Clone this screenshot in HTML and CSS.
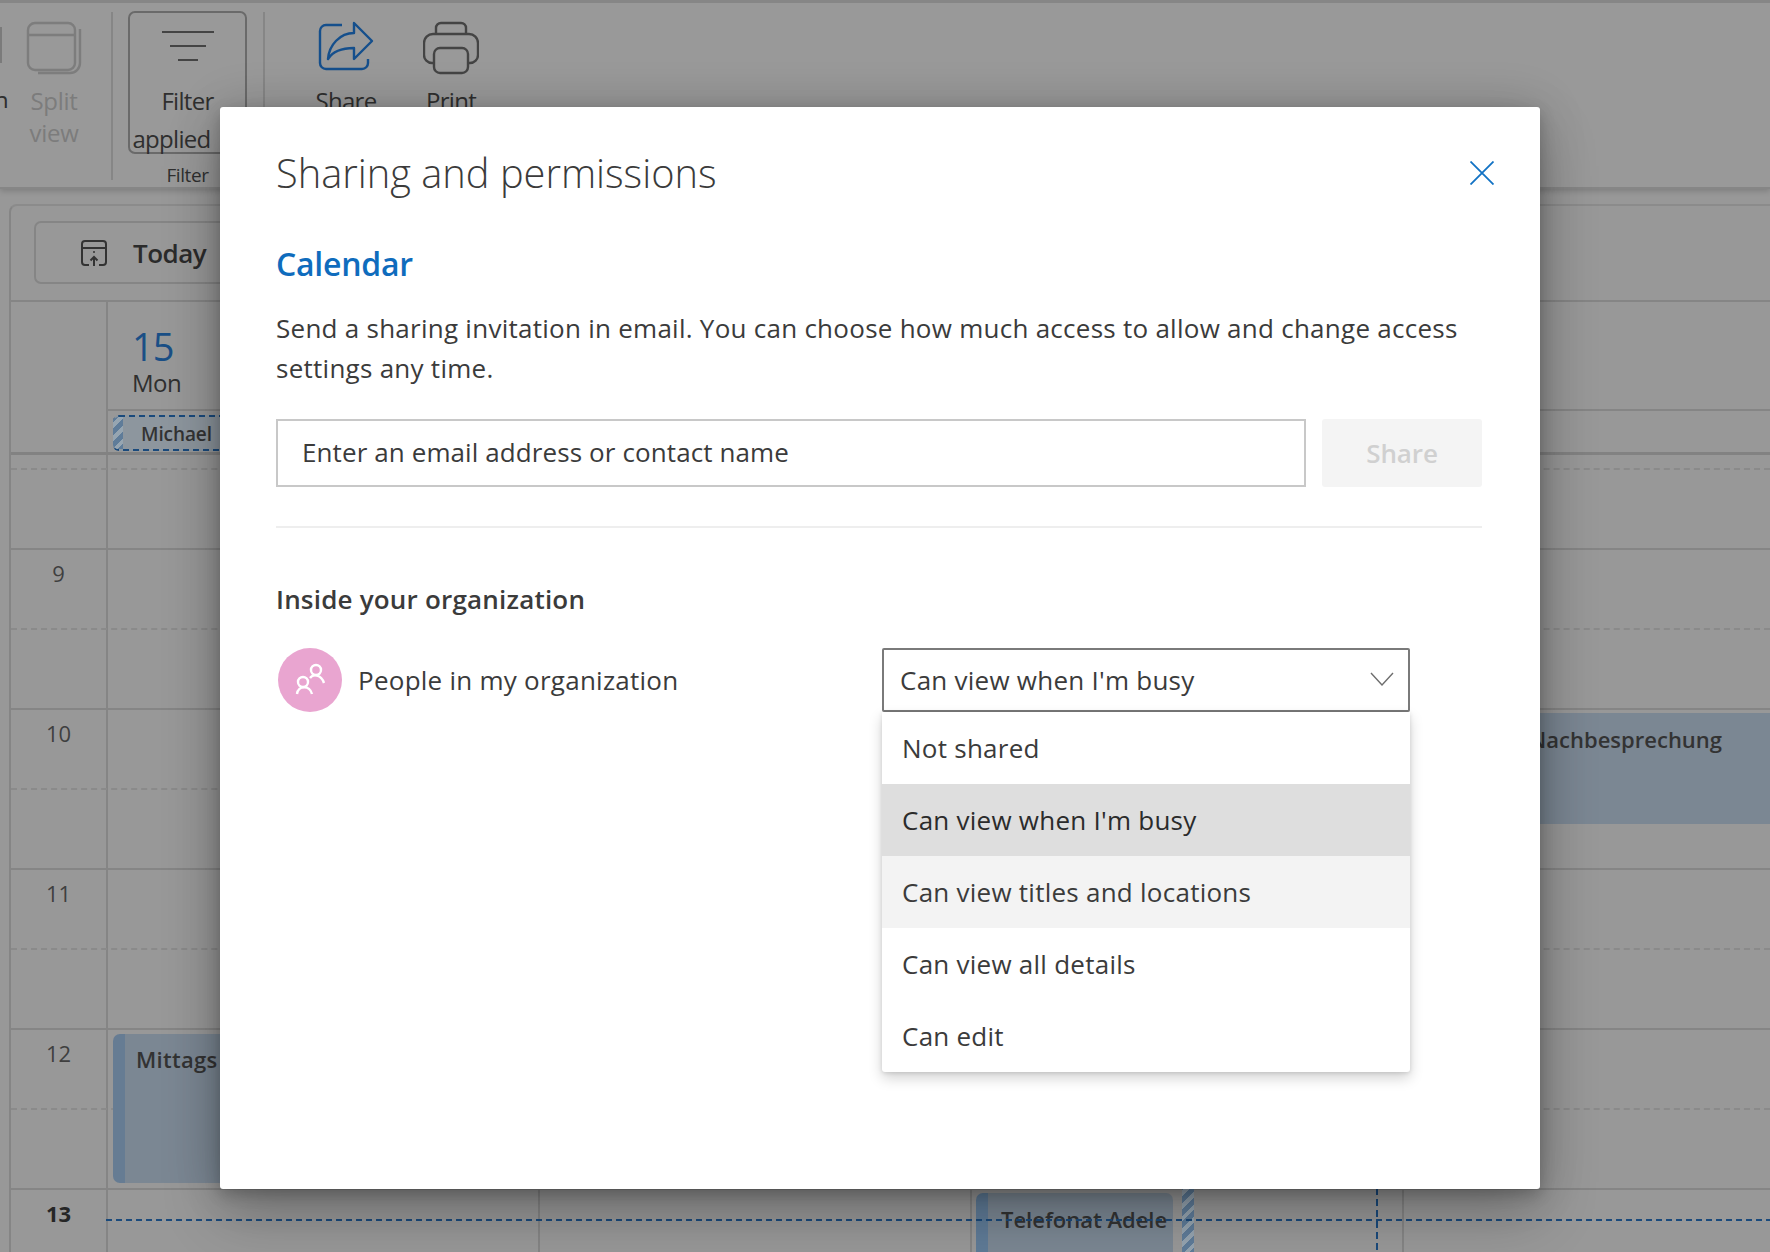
FILE: index.html
```html
<!DOCTYPE html>
<html lang="en">
<head>
  <meta charset="UTF-8">
  <title>Sharing and permissions</title>
  <link rel="stylesheet" href="styles.css">
</head>
<body>
  <div class="app">
    <div class="ribbon">
      <div class="rb-cut">
        <i class="rb-cut-icon"></i>
        <span class="rb-cut-text">n</span>
      </div>
      <div class="rb-btn rb-split disabled">
        <svg class="rb-icon" viewBox="0 0 56 54" fill="none" stroke="#7d7d7d" stroke-width="2.4"><rect x="2" y="2" width="47" height="47" rx="7"/><path d="M2 14H49"/><path d="M54 8V42a10 10 0 0 1-10 10H12"/></svg>
        <span>Split</span>
        <span>view</span>
      </div>
      <i class="rb-divider rb-divider-a"></i>
      <div class="rb-group">
        <div class="rb-btn rb-filter">
          <svg class="rb-icon" viewBox="0 0 56 54" fill="none" stroke="#444" stroke-width="2"><path d="M2 11H54M10 25H46M18 39H38"/></svg>
          <span>Filter</span>
          <span class="rb-applied">applied</span>
        </div>
        <span class="rb-group-name">Filter</span>
      </div>
      <i class="rb-divider rb-divider-b"></i>
      <div class="rb-btn rb-share">
        <svg class="rb-icon" viewBox="0 0 56 54" fill="none" stroke="#154f8c" stroke-width="2.4" stroke-linejoin="round"><path d="M24 4H8a6 6 0 0 0-6 6V42a6 6 0 0 0 6 6H44a6 6 0 0 0 6-6V38"/><path d="M36 2L54 20L36 38V27C24 27 15 30 10 38C11 24 22 12 36 12Z"/></svg>
        <span>Share</span>
      </div>
      <div class="rb-btn rb-print">
        <svg class="rb-icon" viewBox="0 0 56 54" fill="none" stroke="#444" stroke-width="2.4"><path d="M13 13V7a5 5 0 0 1 5-5H38a5 5 0 0 1 5 5V13"/><path d="M11 42H9a8 8 0 0 1-8-8V22a9 9 0 0 1 9-9H46a9 9 0 0 1 9 9V34a8 8 0 0 1-8 8H45"/><rect x="11" y="27" width="34" height="25" rx="6"/></svg>
        <span>Print</span>
      </div>
    </div>

    <div class="calendar">
      <div class="cal-toolbar">
        <div class="today-btn">
          <svg class="today-icon" viewBox="0 0 26 26" fill="none" stroke="#333" stroke-width="2"><path d="M8 25H4a3 3 0 0 1-3-3V4a3 3 0 0 1 3-3H22a3 3 0 0 1 3 3V22a3 3 0 0 1-3 3H18"/><path d="M1 8H25M13 26V17M9.5 20.5L13 17L16.5 20.5"/><circle cx="13" cy="12" r="1" fill="#333" stroke="none"/></svg>
          <span>Today</span>
        </div>
      </div>

      <div class="cal-head">
        <div class="day-head">
          <div class="day-num">15</div>
          <div class="day-name">Mon</div>
        </div>
        <div class="allday">
          <div class="allday-event"><i class="stripes"></i><span>Michael</span></div>
        </div>
      </div>

      <div class="cal-body">
        <div class="half"></div>
        <div class="half half-end half-first"></div>
        <div class="half"><span class="hour-num">9</span></div>
        <div class="half half-end"></div>
        <div class="half"><span class="hour-num">10</span></div>
        <div class="half half-end"></div>
        <div class="half"><span class="hour-num">11</span></div>
        <div class="half half-end"></div>
        <div class="half"><span class="hour-num">12</span></div>
        <div class="half half-end"></div>
        <div class="half"><span class="hour-num hour-now">13</span></div>

        <div class="event event-lunch"><span>Mittags</span></div>
        <div class="event event-review"><span>Nachbesprechung</span></div>
        <div class="event event-call"><span>Telefonat Adele</span></div>
        <i class="event-stripe stripes"></i>
        <i class="now-line"></i>
        <i class="now-mark"></i>
      </div>
    </div>
  </div>

  <div class="modal">
    <div class="modal-head">
      <h1>Sharing and permissions</h1>
      <svg class="modal-close" viewBox="0 0 24 24" fill="none" stroke="#1272c4" stroke-width="1.8"><path d="M0.5 0.5L23.5 23.5M23.5 0.5L0.5 23.5"/></svg>
    </div>
    <h2>Calendar</h2>
    <p class="intro">Send a sharing invitation in email. You can choose how much access to allow and change access settings any time.</p>
    <div class="invite">
      <div class="invite-input">Enter an email address or contact name</div>
      <div class="invite-btn">Share</div>
    </div>
    <hr class="modal-rule">
    <h3>Inside your organization</h3>
    <div class="perm-row">
      <div class="perm-who">
        <svg class="avatar" viewBox="0 0 64 64" fill="none" stroke="#fff" stroke-width="2.4"><circle cx="32" cy="32" r="32" fill="#e9a5d0" stroke="none"/><circle cx="38" cy="22" r="5"/><path d="M32 30C35 26 43 26 46 35"/><circle cx="25" cy="34" r="5"/><path d="M19 46C20 37 32 37 34 46"/></svg>
        <span>People in my organization</span>
      </div>
      <div class="select">
        <span>Can view when I'm busy</span>
        <svg class="select-chev" viewBox="0 0 24 14" fill="none" stroke="#6e6e6e" stroke-width="1.4"><path d="M1 1L12 13L23 1"/></svg>
        <ul class="select-menu">
          <li>Not shared</li>
          <li class="selected">Can view when I'm busy</li>
          <li class="hovered">Can view titles and locations</li>
          <li>Can view all details</li>
          <li>Can edit</li>
        </ul>
      </div>
    </div>
  </div>
</body>
</html>
```

FILE: styles.css
```css
* { box-sizing: border-box; }
html, body { margin: 0; height: 100%; overflow: hidden; }
body { font-family: "Open Sans", "Noto Sans", sans-serif; color: #3b3b3b; background: #989898; }

/* dimmed app behind the dialog */
.app { height: 1252px; display: flex; flex-direction: column; color: #2f2f2f; }

.ribbon { height: 189px; flex: none; display: flex; align-items: flex-start; background: #999; border-top: 3px solid #868686; border-bottom: 2px solid #868686; box-shadow: 0 2px 6px rgba(0, 0, 0, .18); font-size: 24px; letter-spacing: -.7px; }
.rb-cut { width: 15px; flex: none; height: 97px; margin-top: 8px; position: relative; overflow: hidden; }
.rb-cut-icon { display: block; width: 2px; height: 36px; margin: 16px 0 0; background: #7b7b7b; }
.rb-cut-text { display: block; margin: 17px 0 0 -6px; line-height: 39px; }
.rb-btn { display: flex; flex-direction: column; align-items: center; margin-top: 8px; padding-top: 10px; line-height: 38px; }
.rb-icon { width: 56px; height: 54px; margin-bottom: 7px; flex: none; }
.rb-split { width: 78px; line-height: 32px; letter-spacing: -.3px; }
.rb-split .rb-icon { margin-bottom: 10px; }
.disabled { color: #7c7c7c; }
.rb-divider { width: 2px; height: 168px; flex: none; margin-top: 9px; background: #868686; }
.rb-divider-a { margin-left: 18px; }
.rb-divider-b { margin-left: 16px; }
.rb-group { width: 119px; margin-left: 15px; flex: none; display: flex; flex-direction: column; align-items: center; }
.rb-filter { width: 119px; height: 143px; border: 2px solid #6a6a6a; border-radius: 7px; padding-top: 8px; }
.rb-applied { margin-right: 32px; }
.rb-group-name { font-size: 19px; line-height: 28px; margin-top: 7px; letter-spacing: -.4px; }
.rb-share { width: 80px; margin-left: 41px; }
.rb-print { width: 80px; margin-left: 25px; }

.calendar { flex: 1; min-height: 0; margin: 15px 0 0 9px; border-top: 2px solid #8b8b8b; border-left: 2px solid #858585; border-top-left-radius: 8px; background: #989898; }
.cal-toolbar { height: 96px; padding: 15px 0 0 23px; border-bottom: 2px solid #858585; }
.today-btn { width: 320px; height: 63px; display: flex; align-items: center; gap: 26px; padding-left: 45px; border: 2px solid #858585; border-radius: 7px; font-size: 26px; font-weight: 600; letter-spacing: -.5px; color: #2b2b2b; }
.today-icon { width: 26px; height: 26px; }

.cal-head { height: 153px; padding-left: 95px; border-bottom: 3px solid #828282; background: linear-gradient(90deg, #858585 2px, transparent 2px) 95px 0 / 432px 100% no-repeat; }
.day-head { height: 109px; padding: 22px 0 0 26px; border-bottom: 2px solid #858585; }
.day-num { font-size: 38px; line-height: 44px; color: #1a4f86; letter-spacing: -1px; }
.day-name { font-size: 24px; line-height: 30px; letter-spacing: -.5px; }
.allday { padding: 4px 0 0 7px; }
.allday-event { width: 400px; height: 36px; display: flex; align-items: center; background: #8d969e; border: 2px dashed #1a4a7c; border-left: 0; border-radius: 6px 0 0 6px; font-size: 19px; font-weight: 600; letter-spacing: -.1px; color: #333; overflow: hidden; }
.allday-event span { margin: 2px 0 0 18px; }
.allday-event .stripes { width: 10px; height: 36px; flex: none; }
.stripes { display: block; background: repeating-linear-gradient(-45deg, #5f7c99 0 5px, #96a5b1 5px 9px); }

.cal-body { height: 800px; position: relative; overflow: hidden; background: linear-gradient(90deg, #858585 2px, transparent 2px) 95px 0 / 432px 100%; }
.half { height: 80px; border-bottom: 2px dashed #8a8a8a; }
.half:first-child { height: 15px; }
.half-end { border-bottom: 2px solid #858585; }
.hour-num { display: block; width: 95px; padding-top: 9px; text-align: center; font-size: 22px; line-height: 28px; color: #3f3f3f; }
.hour-now { font-weight: 700; color: #262626; }

.event { position: absolute; background: #7b8793; font-size: 22px; font-weight: 600; color: #333; overflow: hidden; white-space: nowrap; }
.event-lunch { left: 102px; top: 579px; width: 300px; height: 149px; border-left: 12px solid #667c93; border-radius: 7px; padding: 10px 0 0 11px; letter-spacing: .3px; }
.event-review { left: 1350px; top: 258px; width: 420px; height: 111px; padding: 11px 59px 0 0; text-align: right; }
.event-call { left: 965px; top: 738px; width: 197px; height: 70px; border-left: 12px solid #5f7b97; border-radius: 7px; padding: 11px 6px 0 13px; }
.event-call span { display: block; overflow: hidden; }
.event-stripe { position: absolute; left: 1171px; top: 700px; width: 12px; height: 100px; }
.now-line { position: absolute; left: 95px; right: 0; top: 764px; height: 2px; background: repeating-linear-gradient(90deg, #1a4a7c 0 6px, transparent 6px 10px); }
.now-mark { position: absolute; left: 1365px; top: 700px; width: 2px; height: 100px; background: repeating-linear-gradient(180deg, #1a4a7c 0 7px, transparent 7px 11px); }

/* dialog */
.modal { position: absolute; left: 220px; top: 107px; width: 1320px; height: 1082px; padding: 40px 58px 0 56px; background: #fff; border-radius: 3px; box-shadow: 0 26px 58px rgba(0, 0, 0, .24), 0 5px 15px rgba(0, 0, 0, .2), 0 0 50px rgba(0, 0, 0, .14); }
.modal-head { height: 52px; display: flex; align-items: center; justify-content: space-between; }
h1 { margin: 0; font-size: 39.8px; line-height: 52px; font-weight: 300; color: #3b3b3b; }
.modal-close { width: 24px; height: 24px; margin-right: -12px; }
h2 { margin: 43px 0 0; font-size: 32px; line-height: 44px; font-weight: 600; letter-spacing: -.25px; color: #0f6cbd; }
.intro { margin: 23px 0 0; font-size: 26px; line-height: 39.5px; letter-spacing: .26px; }
.invite { display: flex; gap: 16px; margin-top: 31px; }
.invite-input { width: 1030px; height: 68px; padding: 0 24px 2px; display: flex; align-items: center; border: 2px solid #c8c8c8; font-size: 26px; letter-spacing: .1px; }
.invite-btn { flex: 1; height: 68px; display: flex; align-items: center; justify-content: center; background: #f4f4f4; border-radius: 3px; font-size: 26px; font-weight: 600; letter-spacing: -.1px; color: #d0d0d0; }
.modal-rule { margin: 39px 0 0; border: 0; border-top: 2px solid #eee; }
h3 { margin: 53px 0 0; font-size: 26px; line-height: 36px; font-weight: 600; letter-spacing: .2px; }
.perm-row { display: grid; grid-template-columns: 606px 528px; margin-top: 31px; font-size: 26px; letter-spacing: .25px; }
.perm-who { display: flex; align-items: center; gap: 16px; padding-left: 2px; }
.avatar { width: 64px; height: 64px; }
.select { position: relative; height: 64px; display: flex; align-items: center; justify-content: space-between; padding: 0 14px 0 16px; border: 2px solid #7a7a7a; border-radius: 2px; }
.select-chev { width: 24px; height: 14px; margin-top: -2px; }
.select-menu { position: absolute; left: -2px; right: -2px; top: 62px; margin: 0; padding: 0; list-style: none; background: #fff; border-radius: 0 0 3px 3px; box-shadow: 0 6px 14px rgba(0, 0, 0, .18), 0 1px 4px rgba(0, 0, 0, .12); }
.select-menu li { height: 72px; display: flex; align-items: center; padding-left: 20px; }
.select-menu .selected { background: #dedede; color: #2b2b2b; }
.select-menu .hovered { background: #f3f3f3; }
```
